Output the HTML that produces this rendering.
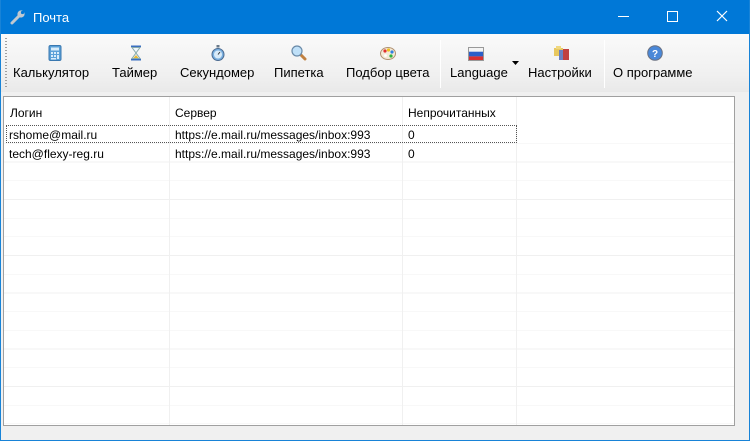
<!DOCTYPE html>
<html><head><meta charset="utf-8"><style>
*{margin:0;padding:0;box-sizing:border-box}
body{width:750px;height:441px;overflow:hidden;background:#f0f0f0;font-family:"Liberation Sans","DejaVu Sans",sans-serif;position:relative}
.win{position:absolute;inset:0;border:1px solid #1883d7;border-top:none}
.title{position:absolute;left:0;top:0;width:750px;height:34px;background:#0078d7;color:#fff;font-size:13px}
.title .t{position:absolute;left:33px;top:10px}
.tb{position:absolute;left:1px;top:34px;width:748px;height:58px;background:linear-gradient(#fafafa,#f0f0f0 70%,#e9e9e9)}
.grip{position:absolute;left:4px;top:4px;width:2px;height:50px;background:repeating-linear-gradient(#a0a0a0 0 1px,transparent 1px 3px)}
.btn{position:absolute;top:31px;font-size:13px;color:#000;white-space:nowrap}
.ic{position:absolute;top:11px;width:16px;height:16px}
.sep{position:absolute;top:6px;width:1px;height:48px;background:#d0d0d0;border-right:1px solid #fff}
.list{position:absolute;left:3px;top:96px;width:732px;height:330px;background:#fff;border:1px solid #a0a0a0;border-right-color:#a0a0a0;overflow:hidden}
.rows{position:absolute;left:0;top:28px;width:100%;height:310px;background:repeating-linear-gradient(transparent 0 18px,#f0f0f0 18px 18.7px)}
.col{position:absolute;top:0;width:1px;height:100%;background:#f0f0f0}
.h{position:absolute;top:9px;font-size:12px;color:#000}
.c{position:absolute;font-size:12px;color:#000;white-space:nowrap}
</style></head><body>
<div class="title">
<svg style="position:absolute;left:9px;top:8px" width="18" height="18" viewBox="0 0 18 18"><path d="M3 15 L10 8" stroke="#c0c8d0" stroke-width="3" stroke-linecap="round"/><circle cx="12" cy="6" r="3.6" fill="#c0c8d0"/><circle cx="13.5" cy="4.5" r="1.6" fill="#0078d7"/></svg>
<span class="t">Почта</span>
<div style="position:absolute;left:618px;top:16px;width:11px;height:1px;background:#fff"></div>
<div style="position:absolute;left:667px;top:11px;width:11px;height:11px;border:1px solid #fff"></div>
<svg style="position:absolute;left:716px;top:10px" width="12" height="12"><path d="M1 1L11 11M11 1L1 11" stroke="#fff" stroke-width="1.2"/></svg>
</div>
<div class="win"></div>
<div class="tb">
<div class="grip"></div>
<svg class="ic" style="left:46px" viewBox="0 0 16 16"><rect x="2" y="0.5" width="12" height="15" rx="1.5" fill="#5aa0d8" stroke="#3a78b0"/><rect x="4" y="2.5" width="8" height="3" fill="#d8ecfa"/><g fill="#d8ecfa"><rect x="4" y="7" width="2" height="2"/><rect x="7" y="7" width="2" height="2"/><rect x="10" y="7" width="2" height="2"/><rect x="4" y="10" width="2" height="2"/><rect x="7" y="10" width="2" height="2"/><rect x="10" y="10" width="2" height="4"/><rect x="4" y="13" width="5" height="1.5"/></g></svg>
<div class="btn" style="left:12px">Калькулятор</div>
<svg class="ic" style="left:127px" viewBox="0 0 16 16"><rect x="3" y="0.5" width="10" height="2" fill="#3a6fc0"/><rect x="3" y="13.5" width="10" height="2" fill="#3a6fc0"/><path d="M4 2.5h8L8 8l4 5.5H4L8 8z" fill="#f0f6fc" stroke="#8aa"/><path d="M5.5 13l2.5-3 2.5 3z" fill="#e8b830"/></svg>
<div class="btn" style="left:111px">Таймер</div>
<svg class="ic" style="left:209px" viewBox="0 0 16 16"><rect x="6.5" y="0" width="3" height="2.5" fill="#6a7a8a"/><circle cx="8" cy="9.5" r="6" fill="#7ab0e0" stroke="#4a6a90"/><circle cx="8" cy="9.5" r="4" fill="#d8eaf8"/><path d="M8 9.5L10 7" stroke="#333"/></svg>
<div class="btn" style="left:179px">Секундомер</div>
<svg class="ic" style="left:290px" viewBox="0 0 16 16"><path d="M9 9l5 5" stroke="#c08040" stroke-width="3" stroke-linecap="round"/><circle cx="6" cy="6" r="5" fill="#bfe0f8" stroke="#6a8aa8" stroke-width="1.2"/></svg>
<div class="btn" style="left:273px">Пипетка</div>
<svg class="ic" style="left:379px" viewBox="0 0 16 16"><ellipse cx="8" cy="8.5" rx="7.5" ry="6" fill="#f4ead8" stroke="#b09070"/><circle cx="5" cy="6" r="1.6" fill="#e03030"/><circle cx="8.5" cy="5" r="1.6" fill="#f0c020"/><circle cx="12" cy="7" r="1.6" fill="#3080e0"/><circle cx="11" cy="11" r="1.6" fill="#30b040"/><circle cx="5.5" cy="10.5" r="1.4" fill="#fff"/></svg>
<div class="btn" style="left:345px">Подбор цвета</div>
<div class="sep" style="left:439px"></div>
<svg class="ic" style="left:467px;top:12px" viewBox="0 0 16 14"><rect y="0" width="16" height="4.7" fill="#f4f4f4"/><rect y="4.7" width="16" height="4.7" fill="#2c5fc8"/><rect y="9.4" width="16" height="4.6" fill="#d83030"/><rect x=".5" y=".5" width="15" height="13" fill="none" stroke="#999"/></svg>
<div class="btn" style="left:449px">Language</div>
<svg style="position:absolute;left:511px;top:27px" width="7" height="4"><path d="M0 0h7L3.5 4z" fill="#000"/></svg>
<svg class="ic" style="left:553px" viewBox="0 0 16 16"><rect x="0" y="3" width="9" height="8" fill="#e8c860"/><rect x="5" y="5" width="8" height="10" fill="#6a80c0"/><rect x="9" y="4" width="6" height="11" fill="#c04040"/><rect x="2" y="1" width="5" height="3" fill="#f0d880"/></svg>
<div class="btn" style="left:527px">Настройки</div>
<div class="sep" style="left:603px"></div>
<svg class="ic" style="left:646px" viewBox="0 0 16 16"><circle cx="8" cy="8" r="7.3" fill="#4a88d8" stroke="#6a7080"/><text x="8" y="12" font-size="10" font-weight="bold" fill="#fff" text-anchor="middle" font-family="Liberation Sans">?</text></svg>
<div class="btn" style="left:612px">О программе</div>
</div>
<div class="list">
<div class="rows"></div>
<div class="col" style="left:165px"></div>
<div class="col" style="left:398px"></div>
<div class="col" style="left:512px"></div>
<div class="h" style="left:6px">Логин</div>
<div class="h" style="left:171px">Сервер</div>
<div class="h" style="left:404px">Непрочитанных</div>
<div style="position:absolute;left:2px;top:28px;width:511px;height:18px;border:1px dotted #555"></div>
<div class="c" style="left:5px;top:31px">rshome@mail.ru</div>
<div class="c" style="left:171px;top:31px">https://e.mail.ru/messages/inbox:993</div>
<div class="c" style="left:404px;top:31px">0</div>
<div class="c" style="left:5px;top:50px">tech@flexy-reg.ru</div>
<div class="c" style="left:171px;top:50px">https://e.mail.ru/messages/inbox:993</div>
<div class="c" style="left:404px;top:50px">0</div>
</div>
</body></html>
